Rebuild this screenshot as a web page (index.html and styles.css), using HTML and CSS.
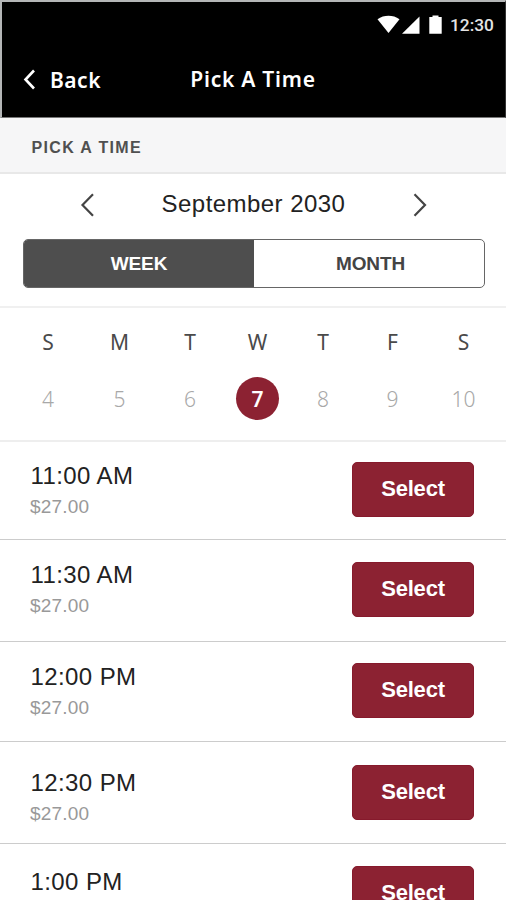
FILE: index.html
```html
<!DOCTYPE html>
<html lang="en">
<head>
<meta charset="utf-8">
<title>Pick A Time</title>
<link rel="stylesheet" href="styles.css">
</head>
<body>
<header class="header">
  <div class="status">
    <svg class="status-icons" width="68" height="22" viewBox="0 0 68 22" fill="#fff">
      <path d="M2.500 5.200C9 .7 18 .7 24.500 5.200L13.500 19z"/>
      <path d="M44.500 2.500V19.700H27z"/>
      <path d="M57.500 1.500h6v1.400h3.200V19.700H54.300V2.900h3.200z"/>
    </svg>
    <span class="clock">12:30</span>
  </div>
  <nav class="nav">
    <a class="back">
      <svg width="14" height="22" viewBox="0 0 14 22" fill="none" stroke="#fff" stroke-width="2.600"><path d="M12 1.500L3.500 10.500l8.500 9"/></svg>
      <span>Back</span>
    </a>
    <h1 class="title">Pick A Time</h1>
  </nav>
</header>
<h2 class="section">PICK A TIME</h2>
<section class="picker">
  <div class="month">
    <svg width="16" height="26" viewBox="0 0 16 26" fill="none" stroke="#444" stroke-width="2.200"><path d="M14 2.300L3.500 13L14 23.700"/></svg>
    <span class="month-name">September 2030</span>
    <svg width="16" height="26" viewBox="0 0 16 26" fill="none" stroke="#444" stroke-width="2.200"><path d="M2.500 2.300L13 13L2.500 23.700"/></svg>
  </div>
  <div class="toggle">
    <span class="tab tab-active">WEEK</span>
    <span class="tab">MONTH</span>
  </div>
</section>
<section class="week">
  <div class="day"><span class="letter">S</span><span class="date">4</span></div>
  <div class="day"><span class="letter">M</span><span class="date">5</span></div>
  <div class="day"><span class="letter">T</span><span class="date">6</span></div>
  <div class="day"><span class="letter">W</span><span class="date date-active">7</span></div>
  <div class="day"><span class="letter">T</span><span class="date">8</span></div>
  <div class="day"><span class="letter">F</span><span class="date">9</span></div>
  <div class="day"><span class="letter">S</span><span class="date">10</span></div>
</section>
<ul class="slots">
  <li class="slot"><div class="info"><span class="time">11:00 AM</span><span class="price">$27.00</span></div><span class="select">Select</span></li>
  <li class="slot"><div class="info"><span class="time">11:30 AM</span><span class="price">$27.00</span></div><span class="select">Select</span></li>
  <li class="slot"><div class="info"><span class="time">12:00 PM</span><span class="price">$27.00</span></div><span class="select">Select</span></li>
  <li class="slot"><div class="info"><span class="time">12:30 PM</span><span class="price">$27.00</span></div><span class="select">Select</span></li>
  <li class="slot"><div class="info"><span class="time">1:00 PM</span></div><span class="select">Select</span></li>
</ul>
</body>
</html>
```
FILE: styles.css
```css
* { box-sizing: border-box; }
body {
  margin: 0;
  width: 506px;
  height: 900px;
  overflow: hidden;
  background: #fff;
  font-family: "Liberation Sans", Arial, sans-serif;
  color: #222;
}
svg { display: block; flex: none; }
h1, h2, ul { margin: 0; padding: 0; }
.header {
  height: 118px;
  background: #000;
  border: solid #b4b6b7;
  border-width: 2px 1px 1px 2px;
  border-right-color: #333;
  border-bottom-color: #777;
  color: #fff;
}
.status {
  height: 44px;
  display: flex;
  justify-content: flex-end;
  padding: 12px 12px 0 0;
  gap: 7px;
}
.clock {
  font: 500 17.300px/22px Roboto, sans-serif;
  color: #e4e4e4;
  width: 43px;
  white-space: nowrap;
}
.nav {
  display: grid;
  grid-template-columns: 1fr auto 1fr;
  align-items: center;
  height: 65px;
  font-family: "Noto Sans", sans-serif;
}
.back {
  display: flex;
  align-items: center;
  gap: 14px;
  padding: 2px 0 0 20px;
  font-weight: 600;
  font-size: 21px;
  line-height: 26px;
  letter-spacing: .5px;
}
.title {
  margin-left: -1px;
  font-size: 21px;
  font-weight: 600;
  line-height: 26px;
  letter-spacing: .75px;
}
.section {
  height: 56px;
  padding-left: 31.5px;
  border-bottom: 2px solid #e8e8e8;
  background: #f6f6f7;
  font-size: 16px;
  line-height: 59px;
  letter-spacing: 1.350px;
  color: #505050;
}
.picker {
  height: 134px;
  border-bottom: 2px solid #f0f0f0;
  padding: 0 21px 0 23px;
}
.month {
  height: 65px;
  display: flex;
  align-items: center;
  justify-content: space-between;
  padding: 0 57px 4px 56px;
}
.month-name {
  margin-top: -2px;
  font-size: 24px;
  line-height: 28px;
  letter-spacing: .45px;
}
.toggle {
  display: grid;
  grid-template-columns: 1fr 1fr;
  height: 49px;
  border: 1px solid #666;
  border-radius: 5px;
  overflow: hidden;
}
.tab {
  padding-left: 3px;
  text-align: center;
  font-size: 19px;
  font-weight: 700;
  line-height: 48px;
  color: #444;
  letter-spacing: -.1px;
}
.tab-active { padding-left: 0; background: #4e4e4e; color: #fff; }
.week {
  height: 134px;
  border-bottom: 2px solid #eee;
  padding: 20px 8px 0 12px;
  display: grid;
  grid-template-columns: 72px 71px 70px 65px 66px 73px 69px;
  font-family: "Noto Sans", sans-serif;
}
.day { display: flex; flex-direction: column; align-items: center; }
.letter { font-size: 21px; line-height: 28px; color: #4a4a4a; }
.date {
  width: 43px;
  height: 43px;
  margin-top: 21px;
  border-radius: 50%;
  text-align: center;
  font-size: 21px;
  font-weight: 300;
  line-height: 44px;
  color: #a8a8a8;
}
.date-active { background: #8c2232; color: #fff; font-weight: 600; }
.slots { list-style: none; }
.slot {
  height: 102px;
  display: flex;
  justify-content: space-between;
  align-items: flex-start;
  padding: 21px 32px 0 30px;
  border-bottom: 1px solid #ccc;
}
.slot:nth-child(1) { height: 98px; padding-top: 20px; }
.slot:nth-child(2) { padding-top: 22px; }
.slot:nth-child(2) .info { margin-top: -1px; }
.slot:nth-child(3) { height: 100px; }
.slot:nth-child(4) { padding-top: 23px; }
.slot:nth-child(5) { height: 56px; padding-top: 22px; border-bottom: 0; }
.info { display: flex; flex-direction: column; }
.slot:nth-child(4) .info { padding-top: 4px; }
.slot:nth-child(5) .info { padding-top: 2px; }
.time { padding-left: .5px; font-size: 24px; line-height: 28px; letter-spacing: .4px; }
.price { margin-top: 4px; font-size: 19px; line-height: 26px; color: #999; letter-spacing: .2px; }
.select {
  width: 122px;
  height: 55px;
  border: 1px solid #861a2c;
  border-radius: 5px;
  background: #8c2232;
  color: #fff;
  text-align: center;
  font-size: 22px;
  font-weight: 700;
  line-height: 52px;
  letter-spacing: -.2px;
}
```
